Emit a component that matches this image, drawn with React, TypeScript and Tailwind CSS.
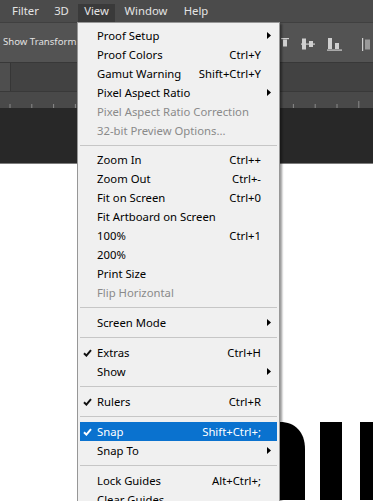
import React from 'react';

type Item =
    | { kind: 'sep'; h: string }
    | { kind: 'row'; label: string; shortcut?: string; sub?: boolean; disabled?: boolean; checked?: boolean; active?: boolean };

const ITEMS: Item[] = [
    { kind: 'row', label: 'Proof Setup', sub: true },
    { kind: 'row', label: 'Proof Colors', shortcut: 'Ctrl+Y' },
    { kind: 'row', label: 'Gamut Warning', shortcut: 'Shift+Ctrl+Y' },
    { kind: 'row', label: 'Pixel Aspect Ratio', sub: true },
    { kind: 'row', label: 'Pixel Aspect Ratio Correction', disabled: true },
    { kind: 'row', label: '32-bit Preview Options...', disabled: true },
    { kind: 'sep', h: 'h-[10px]' },
    { kind: 'row', label: 'Zoom In', shortcut: 'Ctrl++' },
    { kind: 'row', label: 'Zoom Out', shortcut: 'Ctrl+-' },
    { kind: 'row', label: 'Fit on Screen', shortcut: 'Ctrl+0' },
    { kind: 'row', label: 'Fit Artboard on Screen' },
    { kind: 'row', label: '100%', shortcut: 'Ctrl+1' },
    { kind: 'row', label: '200%' },
    { kind: 'row', label: 'Print Size' },
    { kind: 'row', label: 'Flip Horizontal', disabled: true },
    { kind: 'sep', h: 'h-[11px]' },
    { kind: 'row', label: 'Screen Mode', sub: true },
    { kind: 'sep', h: 'h-[11px]' },
    { kind: 'row', label: 'Extras', shortcut: 'Ctrl+H', checked: true },
    { kind: 'row', label: 'Show', sub: true },
    { kind: 'sep', h: 'h-[11px]' },
    { kind: 'row', label: 'Rulers', shortcut: 'Ctrl+R', checked: true },
    { kind: 'sep', h: 'h-[11px]' },
    { kind: 'row', label: 'Snap', shortcut: 'Shift+Ctrl+;', checked: true, active: true },
    { kind: 'row', label: 'Snap To', sub: true },
    { kind: 'sep', h: 'h-[11px]' },
    { kind: 'row', label: 'Lock Guides', shortcut: 'Alt+Ctrl+;' },
    { kind: 'row', label: 'Clear Guides' },
];

const TOP_MENUS = [
    { label: 'Filter', w: 'w-[39px]' },
    { label: '3D', w: 'w-[29px]' },
    { label: 'View', w: 'w-[37px]', open: true },
    { label: 'Window', w: 'w-[58px]' },
    { label: 'Help', w: 'w-[38px]' },
];

function Check({ light }: { light?: boolean }) {
    return (
        <svg width="9" height="8" viewBox="0 0 9 8" className="absolute left-[3px] top-[6px]">
            <path d="M1 4.2 L3.4 6.6 L8 1.2" fill="none" stroke={light ? '#ffffff' : '#111111'} strokeWidth="2" />
        </svg>
    );
}

function Arrow({ light }: { light?: boolean }) {
    return (
        <svg width="4" height="7" viewBox="0 0 4 7" className="absolute right-[6px] top-[6px]">
            <polygon points="0,0 4,3.5 0,7" fill={light ? '#ffffff' : '#000000'} />
        </svg>
    );
}

function AlignIcons() {
    return (
        <svg width="92" height="20" viewBox="0 0 92 20" className="absolute left-[281px] top-[15px]">
            <g fill="#cfcfcf">
                {/* align top */}
                <rect x="0" y="0" width="8" height="1.2" />
                <rect x="2" y="1.5" width="4" height="7" />
                {/* align vertical centers */}
                <rect x="21" y="0.5" width="4" height="11" />
                <rect x="28" y="3" width="4" height="6" />
                <rect x="20" y="5.5" width="14" height="1.2" />
                {/* align bottom */}
                <rect x="47" y="0" width="4" height="11" />
                <rect x="54" y="5" width="4" height="6" />
                <rect x="46" y="11.5" width="15" height="1.2" />
                {/* align left */}
                <rect x="81" y="0" width="1.2" height="13" />
                <rect x="84" y="1.5" width="5" height="10" fill="#9a9a9a" />
            </g>
        </svg>
    );
}

function Ruler() {
    const ticks = Array.from({ length: 17 }, (_, i) => 10 + i * 21.8);
    return (
        <svg width="373" height="17" className="block">
            {ticks.map((x, i) => (
                <line key={i} x1={x} x2={x} y1={i === 16 ? 9 : 12} y2={17} stroke="#8a8a8a" strokeWidth="1" />
            ))}
        </svg>
    );
}

export default function App() {
    return (
        <div className="relative w-[373px] h-[501px] overflow-hidden bg-white font-['Noto_Sans',sans-serif] flex flex-col">
            {/* Menu bar */}
            <div className="h-[22px] bg-[#4b4b4b] flex items-stretch pl-[6px] gap-[2px] text-[11.3px] text-[#e4e4e4]">
                {TOP_MENUS.map(m => (
                    <div
                        key={m.label}
                        className={`${m.w} flex items-center justify-center ${m.open ? 'bg-[#3a3a3a] mt-[4px]' : ''}`}
                    >
                        <span className={m.open ? '-mt-[4px]' : ''}>{m.label}</span>
                    </div>
                ))}
            </div>

            {/* Options bar (text runs under the open menu) */}
            <div className="relative h-[40px] bg-[#535353] border-t border-[#404040] flex items-center pl-[3px] text-[9.6px] text-[#e2e2e2]">
                <div className="w-[74px] overflow-hidden whitespace-nowrap">Show Transform</div>
                <AlignIcons />
            </div>

            {/* Document tabs */}
            <div className="h-[29px] bg-[#424242] border-t border-[#383838] flex">
                <div className="w-[11px] bg-[#4e4e4e] border-r border-[#363636]" />
                <div className="flex-1" />
            </div>

            {/* Ruler */}
            <div className="h-[17px] bg-[#494949] border-t border-[#393939]">
                <Ruler />
            </div>

            {/* Pasteboard */}
            <div className="h-[56px] bg-[#282828] border-b border-[#7c7c7c]" />

            {/* Canvas */}
            <div className="relative flex-1 bg-white">
                <svg width="373" height="336" className="absolute left-0 top-0">
                    <path d="M240 258 L280 258 C295 258 305 268 305 285 L305 336 L240 336 Z" fill="#000" />
                    <rect x="320" y="258" width="22" height="80" fill="#000" />
                    <rect x="360" y="258" width="22" height="80" fill="#000" />
                </svg>
            </div>

            {/* View menu */}
            <div className="absolute left-[77px] top-[22px] w-[203px] bg-[#f0f0f0] border border-[#979797] pt-[3px] px-[2px] pb-[4px] shadow-[2px_2px_2px_rgba(0,0,0,0.4)] text-[11.3px] leading-none">
                {ITEMS.map((it, i) =>
                    it.kind === 'sep' ? (
                        <div key={i} className={`${it.h} flex flex-col justify-start pt-[5px]`}>
                            <div className="h-px bg-[#c6c6c6]" />
                        </div>
                    ) : (
                        <div
                            key={i}
                            className={`relative h-[19px] flex items-center pl-[17px] pr-[16px] whitespace-nowrap ${it.active ? 'bg-[#0a72cf] text-white' : it.disabled ? 'text-[#8a8a8a]' : 'text-black'}`}
                        >
                            {it.checked && <Check light={it.active} />}
                            <span className="flex-1">{it.label}</span>
                            {it.shortcut && <span>{it.shortcut}</span>}
                            {it.sub && <Arrow light={it.active} />}
                        </div>
                    )
                )}
            </div>
        </div>
    );
}
